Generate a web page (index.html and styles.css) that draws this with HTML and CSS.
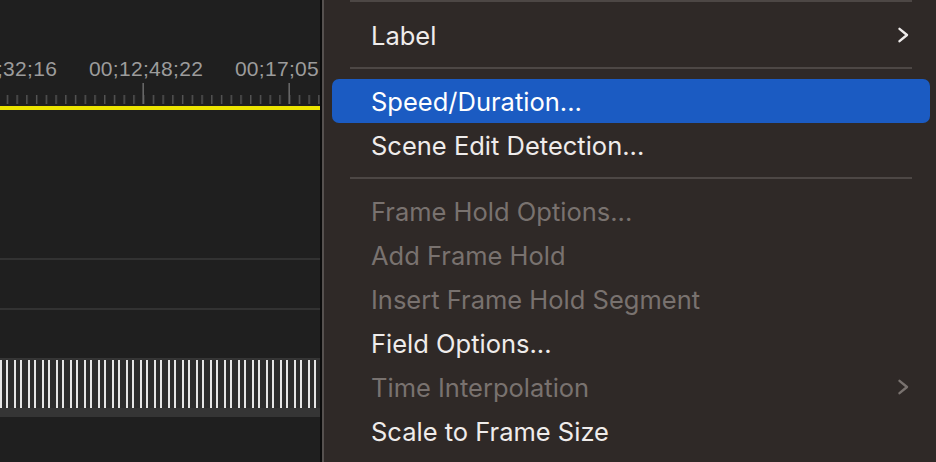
FILE: index.html
```html
<!DOCTYPE html>
<html lang="en">
<head>
<meta charset="utf-8">
<title>Timeline context menu</title>
<link rel="stylesheet" href="styles.css">
</head>
<body>
<div class="screen">
  <section class="timeline">
    <div class="ruler">
      <div class="timecodes">
        <span class="tc">00;08;32;16</span>
        <span class="tc">00;12;48;22</span>
        <span class="tc">00;17;05;00</span>
      </div>
      <svg class="ticks" width="320" height="25" viewBox="0 0 320 25">
        <defs>
          <pattern id="minor" x="6.73" y="0" width="9.7333" height="25" patternUnits="userSpaceOnUse">
            <rect x="0" y="14" width="1.4" height="9" fill="#565656"/>
          </pattern>
        </defs>
        <rect x="0" y="0" width="320" height="25" fill="url(#minor)"/>
        <rect x="142.4" y="2" width="1.6" height="21" fill="#666"/>
        <rect x="288.4" y="2" width="1.6" height="21" fill="#666"/>
      </svg>
      <div class="playbar"></div>
    </div>
    <div class="space space-big"></div>
    <div class="track-line"></div>
    <div class="space"></div>
    <div class="track-line"></div>
    <div class="space"></div>
    <div class="clip">
      <div class="stripes"></div>
    </div>
    <div class="space"></div>
  </section>
  <div class="divider"></div>
  <nav class="menu">
    <div class="sep sep-first"></div>
    <div class="item">
      <span>Label</span>
      <svg class="chev" width="13" height="16" viewBox="0 0 13 16"><path d="M2.5 1.8 L10 8 L2.5 14.2" fill="none" stroke="currentColor" stroke-width="2.4" stroke-linecap="round" stroke-linejoin="round"/></svg>
    </div>
    <div class="sep"></div>
    <div class="item active"><span>Speed/Duration...</span></div>
    <div class="item"><span>Scene Edit Detection...</span></div>
    <div class="sep"></div>
    <div class="item disabled"><span>Frame Hold Options...</span></div>
    <div class="item disabled"><span>Add Frame Hold</span></div>
    <div class="item disabled"><span>Insert Frame Hold Segment</span></div>
    <div class="item"><span>Field Options...</span></div>
    <div class="item disabled">
      <span>Time Interpolation</span>
      <svg class="chev" width="13" height="16" viewBox="0 0 13 16"><path d="M2.5 1.8 L10 8 L2.5 14.2" fill="none" stroke="currentColor" stroke-width="2.4" stroke-linecap="round" stroke-linejoin="round"/></svg>
    </div>
    <div class="item"><span>Scale to Frame Size</span></div>
  </nav>
</div>
</body>
</html>
```

FILE: styles.css
```css
* { box-sizing: border-box; }

html, body {
  margin: 0;
  padding: 0;
  background: #1f1f1f;
}

.screen {
  display: flex;
  width: 936px;
  height: 462px;
  overflow: hidden;
}

/* ---------- timeline ---------- */
.timeline {
  width: 320px;
  flex: 0 0 320px;
  display: flex;
  flex-direction: column;
  background: #1f1f1f;
  overflow: hidden;
}

.ruler {
  height: 110px;
  flex: 0 0 110px;
  display: flex;
  flex-direction: column;
}

.timecodes {
  display: flex;
  margin-left: -73px;
  padding-top: 57px;
  height: 81px;
  white-space: nowrap;
}

.tc {
  flex: 0 0 146px;
  width: 146px;
  text-align: center;
  font-family: "Liberation Sans", Arial, sans-serif;
  font-size: 21px;
  line-height: 24px;
  letter-spacing: 0.3px;
  color: #9c9c9c;
}

.ticks {
  display: block;
  flex: 0 0 25px;
}

.playbar {
  height: 4px;
  flex: 0 0 4px;
  background: #ece400;
}

.space {
  flex: 0 0 48px;
}

.space-big {
  flex: 0 0 148px;
}

.track-line {
  flex: 0 0 2px;
  background: #323232;
}

.clip {
  flex: 0 0 59px;
  padding-top: 2px;
  background: #353535;
}

.stripes {
  height: 48px;
  background-color: #2d2d2d;
  background-image: repeating-linear-gradient(
    to right,
    #e6e6e6 0, #e6e6e6 2px,
    transparent 2px, transparent 6px,
    #e6e6e6 6px, #e6e6e6 8px,
    transparent 8px, transparent 14px
  );
}

.divider {
  flex: 0 0 2px;
  background: #0b0b0b;
}

/* ---------- context menu ---------- */
.menu {
  flex: 1 1 auto;
  display: flex;
  flex-direction: column;
  background: #2f2927;
  border-left: 2px solid #56514f;
  font-family: Inter, "Liberation Sans", Arial, sans-serif;
  font-size: 25.5px;
  color: #efeceb;
}

.sep {
  height: 2px;
  flex: 0 0 2px;
  margin: 10px 24px 10px 26px;
  background: #4d4745;
}

.sep-first {
  margin-top: 0;
  margin-bottom: 11px;
}

.item {
  height: 44px;
  flex: 0 0 44px;
  display: flex;
  align-items: center;
  justify-content: space-between;
  margin: 0 6px 0 8px;
  padding: 0 20px 0 39px;
  border-radius: 7px;
  white-space: nowrap;
}

.item.active {
  background: #1b5bc2;
  color: #ffffff;
}

.item.disabled {
  color: #79726f;
}

.chev {
  display: block;
  color: inherit;
}
```
